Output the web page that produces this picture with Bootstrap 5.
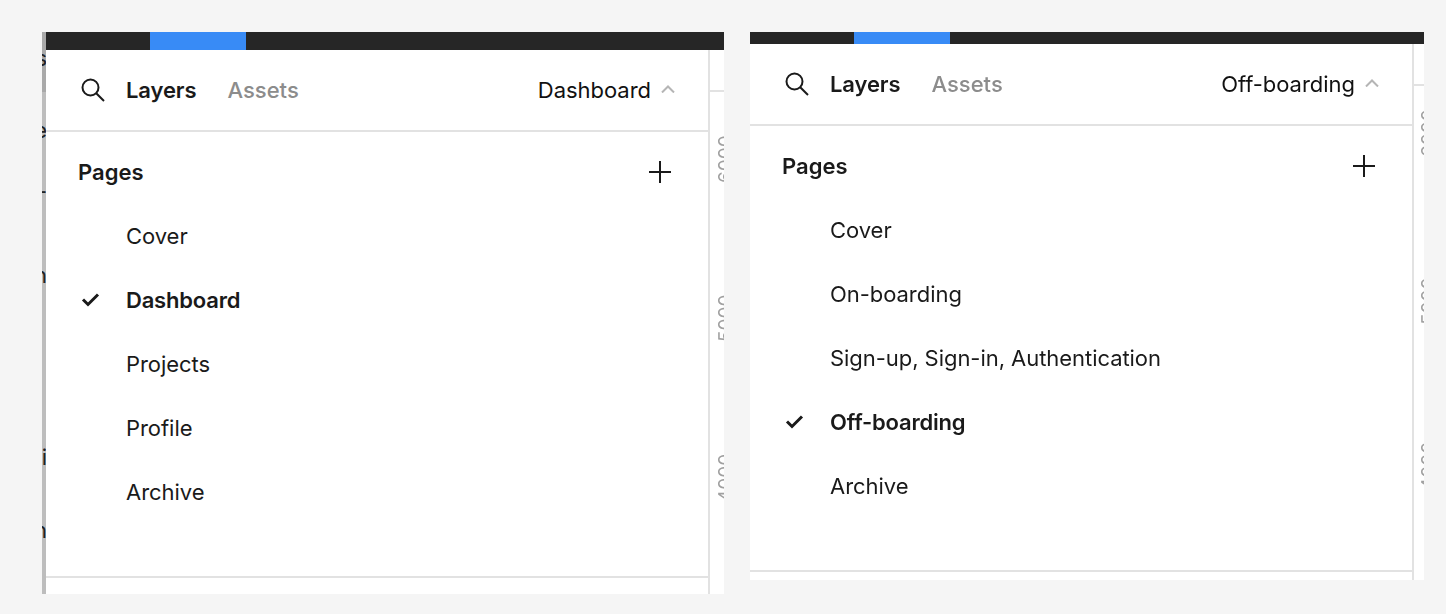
<!DOCTYPE html>
<html lang="en">
<head>
<meta charset="UTF-8">
<meta name="viewport" content="width=device-width, initial-scale=1.0">
<title>Layers panel</title>
<link href="https://cdn.jsdelivr.net/npm/bootstrap@5.3.0/dist/css/bootstrap.min.css" rel="stylesheet">
<style>
html, body { height: 100%; }
body { background: #f5f5f5; font-family: Inter, "Liberation Sans", sans-serif; color: #1a1a1a; overflow: hidden; }
.shots { padding: 32px 0 0 42px; gap: 26px; will-change: opacity; }
.frame-a { width: 682px; height: 562px; }
.frame-b { width: 674px; height: 548px; }
.canvas-strip { width: 4px; background: #bdbdbd; overflow: hidden; position: relative; flex: none; }
.canvas-strip::before { content: ""; position: absolute; left: 0; right: 0; top: 0; height: 60px; background: #a9a9a9; }
.canvas-strip span { position: absolute; right: -1px; font-size: 22px; line-height: 22px; color: #222; }
.top-bar { background: #262626; flex: none; }
.frame-a .top-bar { height: 18px; }
.frame-b .top-bar { height: 12px; }
.tab-on { width: 96px; background: #388bf6; margin-left: 104px; height: 100%; }
.pane { flex: 1 1 0; background: #fff; border-right: 2px solid #e2e2e2; font-size: 22px; min-width: 0; }
.pane-head { height: 82px; border-bottom: 2px solid #e2e2e2; padding: 0 33px 0 35px; flex: none; }
.pane-head svg.find { width: 24px; height: 24px; margin-right: 21px; }
.tab-layers { font-weight: 600; margin-right: 31px; letter-spacing: -.1px; }
.tab-assets { font-weight: 500; color: #8c8c8c; }
.page-pick { color: #111; letter-spacing: -.03px; }
.page-pick svg { width: 14px; height: 8px; margin-left: 10px; margin-bottom: 2px; }
.pages-title { height: 72px; padding: 8px 36px 0 32px; font-weight: 600; flex: none; }
.pages-title svg { width: 24px; height: 24px; }
.page-row { height: 64px; padding-left: 80px; position: relative; letter-spacing: -.05px; }
.page-row.active { font-weight: 600; letter-spacing: -.2px; }
.page-row svg { position: absolute; left: 35px; top: 24px; width: 19px; height: 15px; }
.pane-foot { border-top: 2px solid #e2e2e2; flex: none; }
.frame-a .pane-foot { height: 18px; }
.frame-b .pane-foot { height: 10px; }
.ruler { background: #fff; overflow: hidden; position: relative; flex: none; }
.frame-a .ruler { width: 14px; }
.frame-b .ruler { width: 10px; }
.ruler-tick { height: 42px; border-bottom: 2px solid #e2e2e2; }
.ruler span { position: absolute; font-size: 19px; line-height: 20px; color: #a0a0a0; transform: rotate(-90deg); transform-origin: 0 0; white-space: nowrap; text-rendering: geometricPrecision; }
.frame-a .ruler span { left: 6px; }
.frame-b .ruler span { left: 5px; }
</style>
</head>
<body>

<div class="shots d-flex align-items-start">

    <!-- Dashboard panel -->
    <div class="frame-a d-flex">
        <div class="canvas-strip">
            <span style="top:15px">s</span>
            <span style="top:87px">e</span>
            <span style="top:148px">-</span>
            <span style="top:232px">n</span>
            <span style="top:414px">i</span>
            <span style="top:487px">n</span>
        </div>
        <div class="flex-grow-1 d-flex flex-column">
            <div class="top-bar"><div class="tab-on"></div></div>
            <div class="flex-grow-1 d-flex">
                <div class="pane d-flex flex-column">
                    <div class="pane-head d-flex align-items-center">
                        <svg class="find" viewBox="0 0 24 24" fill="none" stroke="#1a1a1a" stroke-width="2"><circle cx="9.5" cy="9.5" r="8"/><path d="M15.2 15.2 23 23"/></svg>
                        <span class="tab-layers">Layers</span>
                        <span class="tab-assets">Assets</span>
                        <span class="page-pick ms-auto d-flex align-items-center">Dashboard
                            <svg viewBox="0 0 14 8" fill="none" stroke="#b5b5b5" stroke-width="2"><path d="M1 7.5 7 1.5l6 6"/></svg>
                        </span>
                    </div>
                    <div class="pages-title d-flex align-items-center justify-content-between">
                        <span>Pages</span>
                        <svg viewBox="0 0 24 24" fill="none" stroke="#1a1a1a" stroke-width="2"><path d="M12 1v22M1 12h22"/></svg>
                    </div>
                    <ul class="list-unstyled m-0 flex-grow-1">
                        <li class="page-row d-flex align-items-center">Cover</li>
                        <li class="page-row active d-flex align-items-center">
                            <svg viewBox="0 0 19 15" fill="none" stroke="#1a1a1a" stroke-width="3"><path d="M2 7.5 7 12.5 17 2.5"/></svg>
                            Dashboard
                        </li>
                        <li class="page-row d-flex align-items-center">Projects</li>
                        <li class="page-row d-flex align-items-center">Profile</li>
                        <li class="page-row d-flex align-items-center">Archive</li>
                    </ul>
                    <div class="pane-foot"></div>
                </div>
                <div class="ruler">
                    <div class="ruler-tick"></div>
                    <span style="top:133px">6000</span>
                    <span style="top:292px">5000</span>
                    <span style="top:452px">4000</span>
                </div>
            </div>
        </div>
    </div>

    <!-- Off-boarding panel -->
    <div class="frame-b d-flex flex-column">
        <div class="top-bar"><div class="tab-on"></div></div>
        <div class="flex-grow-1 d-flex">
            <div class="pane d-flex flex-column">
                <div class="pane-head d-flex align-items-center">
                    <svg class="find" viewBox="0 0 24 24" fill="none" stroke="#1a1a1a" stroke-width="2"><circle cx="9.5" cy="9.5" r="8"/><path d="M15.2 15.2 23 23"/></svg>
                    <span class="tab-layers">Layers</span>
                    <span class="tab-assets">Assets</span>
                    <span class="page-pick ms-auto d-flex align-items-center">Off-boarding
                        <svg viewBox="0 0 14 8" fill="none" stroke="#b5b5b5" stroke-width="2"><path d="M1 7.5 7 1.5l6 6"/></svg>
                    </span>
                </div>
                <div class="pages-title d-flex align-items-center justify-content-between">
                    <span>Pages</span>
                    <svg viewBox="0 0 24 24" fill="none" stroke="#1a1a1a" stroke-width="2"><path d="M12 1v22M1 12h22"/></svg>
                </div>
                <ul class="list-unstyled m-0 flex-grow-1">
                    <li class="page-row d-flex align-items-center">Cover</li>
                    <li class="page-row d-flex align-items-center">On-boarding</li>
                    <li class="page-row d-flex align-items-center">Sign-up, Sign-in, Authentication</li>
                    <li class="page-row active d-flex align-items-center">
                        <svg viewBox="0 0 19 15" fill="none" stroke="#1a1a1a" stroke-width="3"><path d="M2 7.5 7 12.5 17 2.5"/></svg>
                        Off-boarding
                    </li>
                    <li class="page-row d-flex align-items-center">Archive</li>
                </ul>
                <div class="pane-foot"></div>
            </div>
            <div class="ruler">
                <div class="ruler-tick"></div>
                <span style="top:113px">6000</span>
                <span style="top:281px">5000</span>
                <span style="top:446px">4000</span>
            </div>
        </div>
    </div>

</div>

<script src="https://cdn.jsdelivr.net/npm/bootstrap@5.3.0/dist/js/bootstrap.bundle.min.js"></script>
</body>
</html>
